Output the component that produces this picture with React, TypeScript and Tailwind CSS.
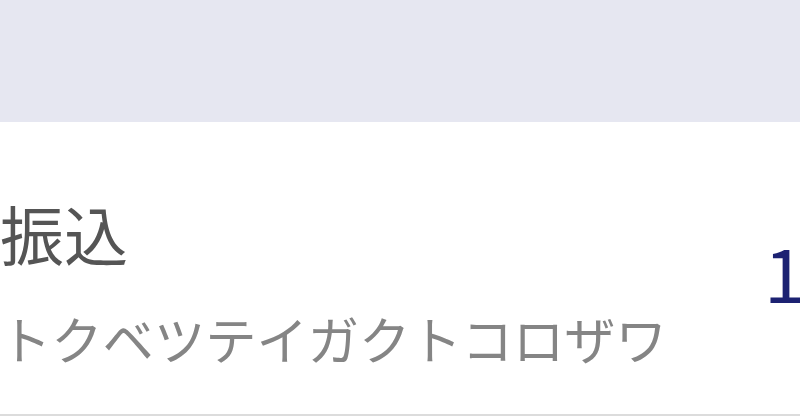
export default function App() {
  return (
    <div
      className="w-[800px] h-[419px] overflow-hidden bg-white"
      style={{ fontFamily: '"Noto Sans CJK JP", "Noto Sans", sans-serif' }}
    >
      <div className="h-[122px] bg-[#e6e7f1]" />
      <div className="flex items-start pt-[78px] pb-[51px] border-b-2 border-[#dcdcdc]">
        <div className="flex-1 flex flex-col">
          <div className="text-[64px] leading-none text-[#555555]">振込</div>
          <div className="mt-[48px] text-[51.3px] leading-none text-[#858585] whitespace-nowrap">
            トクベツテイガクトコロザワ
          </div>
        </div>
        <div className="w-[36px] shrink-0 mt-[34px] text-[74px] leading-none text-[#1c2272] whitespace-nowrap">
          1
        </div>
      </div>
    </div>
  );
}
